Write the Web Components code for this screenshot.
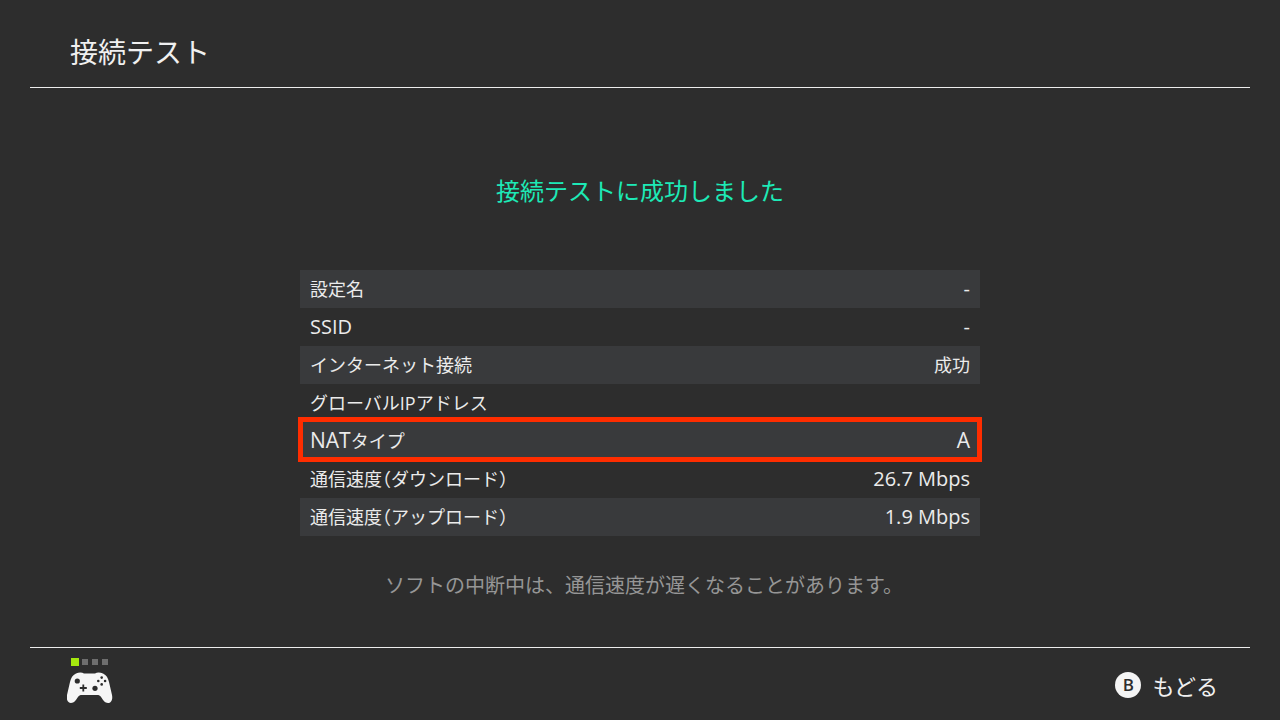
<!DOCTYPE html>
<html lang="ja">
<head>
<meta charset="utf-8">
<title>接続テスト</title>
<style>
  html, body { margin: 0; padding: 0; }
  body {
    width: 1280px;
    height: 720px;
    overflow: hidden;
    background: #2d2d2d;
    color: #ebebeb;
    font-family: "Open Sans", "Noto Sans CJK JP", sans-serif;
  }
</style>
</head>
<body>
<test-screen>
  <span slot="title">接続テスト</span>
  <span slot="heading">接続テストに成功しました</span>
  <result-row>設定名<latin-text slot="value">-</latin-text></result-row>
  <result-row><latin-text>SSID</latin-text><latin-text slot="value">-</latin-text></result-row>
  <result-row>インターネット接続<span slot="value">成功</span></result-row>
  <result-row>グローバルIPアドレス</result-row>
  <result-row highlighted><latin-text wide>NAT</latin-text>タイプ<latin-text wide slot="value">A</latin-text></result-row>
  <result-row>通信速度<half-width>（</half-width>ダウンロード<half-width>）</half-width><latin-text slot="value">26.7 Mbps</latin-text></result-row>
  <result-row>通信速度<half-width>（</half-width>アップロード<half-width>）</half-width><latin-text slot="value">1.9 Mbps</latin-text></result-row>
  <span slot="note">ソフトの中断中は、通信速度が遅くなることがあります。</span>
  <console-footer slot="footer" action="もどる" button="B"></console-footer>
</test-screen>

<script>
class LatinText extends HTMLElement {
  constructor() {
    super();
    this.attachShadow({ mode: 'open' });
    this.shadowRoot.innerHTML = `<style>:host { display: inline; font-size: 20px; } :host([wide]) { font-size: 21px; }</style><slot></slot>`;
  }
}

class HalfWidth extends HTMLElement {
  constructor() {
    super();
    this.attachShadow({ mode: 'open' });
    this.shadowRoot.innerHTML = `<style>:host { display: inline; font-feature-settings: "halt"; }</style><slot></slot>`;
  }
}

class TestScreen extends HTMLElement {
  constructor() {
    super();
    this.attachShadow({ mode: 'open' });
    this.shadowRoot.innerHTML = `
      <style>
        :host { display: flex; flex-direction: column; height: 720px; }
        header {
          height: 87px;
          margin: 0 30px;
          padding: 16px 0 0 40px;
          box-sizing: border-box;
          display: flex;
          align-items: center;
          font-size: 28px;
          line-height: 1;
          color: #f0f0f0;
        }
        .rule { height: 1px; margin: 0 30px; background: #ececec; flex: none; }
        main { flex: 1; display: flex; flex-direction: column; align-items: center; }
        .heading {
          margin-top: 87px;
          height: 32px;
          line-height: 32px;
          font-size: 24px;
          color: #1de9b6;
        }
        .rows { margin-top: 63px; width: 680px; display: flex; flex-direction: column; }
        .note {
          margin-top: 35px;
          padding-left: 8px;
          font-size: 20px;
          line-height: 30px;
          color: #969696;
        }
        .bottom { flex: none; height: 72px; }
      </style>
      <header><slot name="title"></slot></header>
      <div class="rule"></div>
      <main>
        <div class="heading"><slot name="heading"></slot></div>
        <div class="rows"><slot></slot></div>
        <div class="note"><slot name="note"></slot></div>
      </main>
      <div class="rule"></div>
      <div class="bottom"><slot name="footer"></slot></div>
    `;
  }
}

class ResultRow extends HTMLElement {
  constructor() {
    super();
    this.attachShadow({ mode: 'open' });
    this.shadowRoot.innerHTML = `
      <style>
        :host {
          display: flex;
          justify-content: space-between;
          align-items: center;
          position: relative;
          box-sizing: border-box;
          height: 38px;
          padding: 0 10px 2px;
          font-size: 18px;
          color: #ebebeb;
        }
        :host(:nth-child(odd)) { background: #393a3c; }
        :host([highlighted])::after {
          content: "";
          position: absolute;
          left: -2px;
          right: -2px;
          top: -5px;
          bottom: -2px;
          border: 5px solid #ff2d00;
        }
      </style>
      <span><slot></slot></span>
      <span><slot name="value"></slot></span>
    `;
  }
}

class ConsoleFooter extends HTMLElement {
  constructor() {
    super();
    this.attachShadow({ mode: 'open' });
  }

  connectedCallback() {
    const action = this.getAttribute('action') || '';
    const button = this.getAttribute('button') || '';
    this.shadowRoot.innerHTML = `
      <style>
        :host {
          display: flex;
          justify-content: space-between;
          height: 72px;
          padding: 0 62px 0 67px;
          color: #f0f0f0;
        }
        .status { display: flex; flex-direction: column; padding-top: 10px; }
        .dots { display: flex; align-items: center; gap: 4px; height: 8px; margin-left: 4px; }
        .dots i { width: 6px; height: 6px; background: #6e6e6e; }
        .dots i:first-child { width: 8px; height: 8px; background: #a5e80e; margin-right: -1px; }
        svg.pad { display: block; margin-top: 6px; }
        .action { display: flex; align-items: center; gap: 11px; padding-top: 1px; font-size: 22px; }
        .btn {
          width: 26px;
          height: 26px;
          border-radius: 50%;
          background: #f4f4f4;
          color: #2d2d2d;
          font-size: 17px;
          font-weight: 600;
          line-height: 26px;
          text-align: center;
        }
      </style>
      <div class="status">
        <div class="dots"><i></i><i></i><i></i><i></i></div>
        <svg class="pad" width="46" height="32" viewBox="0 0 46 32">
          <path fill="#f6f6f6" d="M9 1.5 C12 0 15 0 17 1.5 H28 C30 0 33 0 36 1.500 C39.500 3 41 6 42 10 L45 23 C46 28 44 31 41 31 C38 31 36 28 34 25 C33 23.500 32 23 30 23 H15 C13 23 12 23.500 11 25 C9 28 7 31 4 31 C1 31 -1 28 0 23 L3 10 C4 6 5.500 3 9 1.500 Z"/>
          <circle cx="10.300" cy="9" r="2.600" fill="#2d2d2d"/>
          <circle cx="28" cy="16.300" r="2.600" fill="#2d2d2d"/>
          <path fill="#2d2d2d" d="M15.400 12.500 h1.800 v2.600 h2.600 v1.800 h-2.600 v2.600 h-1.800 v-2.600 h-2.600 v-1.800 h2.600 z"/>
          <circle cx="34.700" cy="5.600" r="1.300" fill="#2d2d2d"/>
          <circle cx="34.700" cy="12.400" r="1.300" fill="#2d2d2d"/>
          <circle cx="31.300" cy="9" r="1.300" fill="#2d2d2d"/>
          <circle cx="38.100" cy="9" r="1.300" fill="#2d2d2d"/>
        </svg>
      </div>
      <div class="action"><span class="btn">${button}</span><span>${action}</span></div>
    `;
  }
}

customElements.define('latin-text', LatinText);
customElements.define('half-width', HalfWidth);
customElements.define('test-screen', TestScreen);
customElements.define('result-row', ResultRow);
customElements.define('console-footer', ConsoleFooter);
</script>
</body>
</html>
